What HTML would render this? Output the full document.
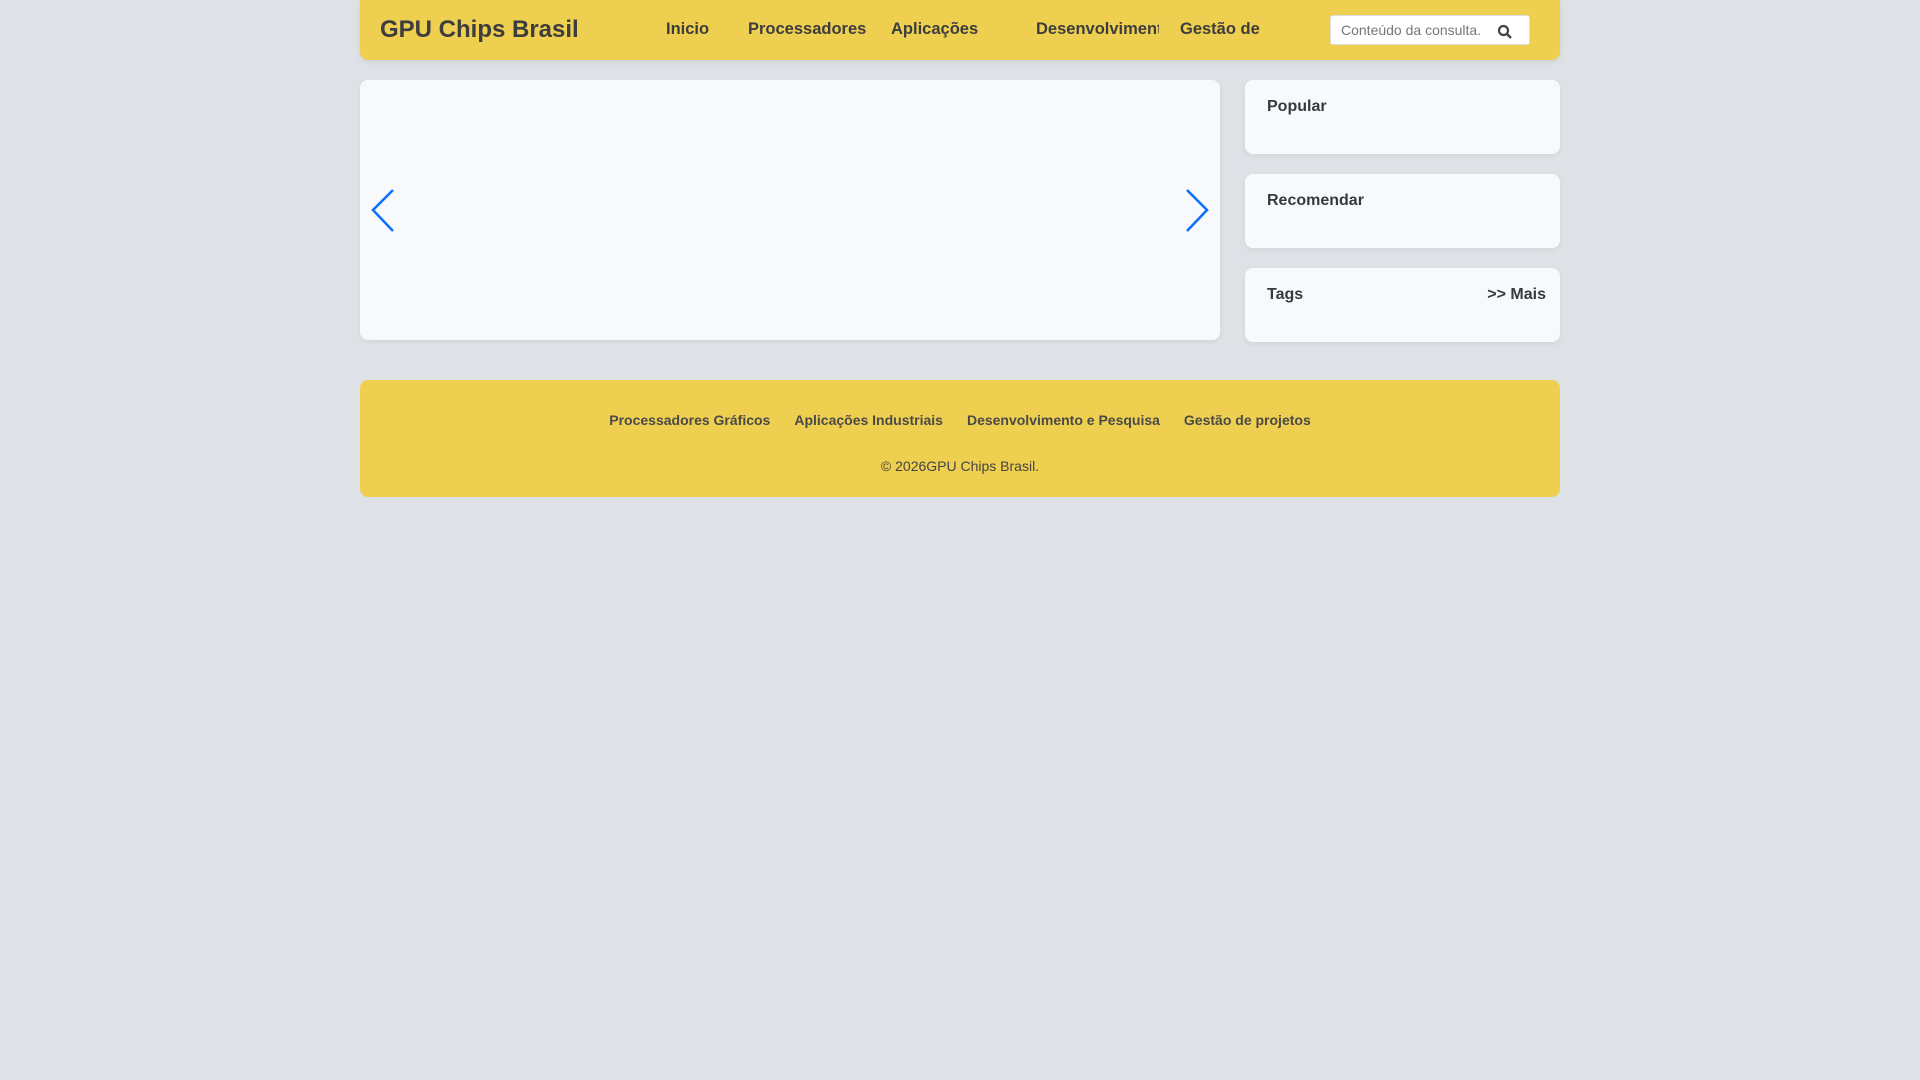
<!DOCTYPE html>
<html><head><meta charset="utf-8"><style>
*{margin:0;padding:0;box-sizing:border-box}
body{width:1920px;height:1080px;background:#dee2e6;font-family:"Liberation Sans",sans-serif;position:relative;overflow:hidden;color:#343a40}
.hdr{position:absolute;left:360px;top:0;width:1200px;height:60px;background:#eecf4f;border-radius:0 0 8px 8px;box-shadow:0 2px 6px rgba(0,0,0,.08)}
.t{position:absolute;white-space:nowrap;font-weight:bold;color:#3d3d3d}
.box{position:absolute;background:#f8f9fa;border-radius:8px;box-shadow:0 2px 6px rgba(0,0,0,.06)}
.foot{position:absolute;left:360px;top:380px;width:1200px;height:117px;background:#eecf4f;border-radius:8px}
</style></head><body>
<div class="hdr">
<div class="t" style="left:20px;top:16px;font-size:24px">GPU Chips Brasil</div>
<div class="t" style="left:306px;top:20px;font-size:16.5px">Inicio</div>
<div class="t" style="left:388px;top:20px;font-size:16.5px">Processadores</div>
<div class="t" style="left:531px;top:20px;font-size:16.5px">Aplicações</div>
<div class="t" style="left:676px;top:20px;font-size:16.5px;width:123px;overflow:hidden">Desenvolvimento</div>
<div class="t" style="left:820px;top:20px;font-size:16.5px">Gestão de</div>
<div style="position:absolute;left:970px;top:15px;width:200px;height:30px;background:#fff;border:1px solid #ddd;border-radius:3px">
<span style="position:absolute;left:10px;top:6px;font-size:14px;color:#777">Conteúdo da consulta.</span>
<svg style="position:absolute;left:166px;top:8px" width="16" height="16" viewBox="0 0 16 16"><circle cx="6.5" cy="6.5" r="4.5" fill="none" stroke="#444" stroke-width="2.2"/><path d="M10 10l4 4" stroke="#444" stroke-width="2.5"/></svg>
</div>
</div>
<div class="box" style="left:360px;top:80px;width:860px;height:260px">
<svg style="position:absolute;left:10px;top:108px" width="26" height="46" viewBox="0 0 26 46"><path d="M23 2L3 22L23 43" fill="none" stroke="#0d6efd" stroke-width="2.5"/></svg>
<svg style="position:absolute;left:824px;top:108px" width="26" height="46" viewBox="0 0 26 46"><path d="M3 2L23 22L3 43" fill="none" stroke="#0d6efd" stroke-width="2.5"/></svg>
</div>
<div class="box" style="left:1245px;top:80px;width:315px;height:74px"><div class="t" style="left:22px;top:18px;font-size:16px;color:#343a40">Popular</div></div>
<div class="box" style="left:1245px;top:174px;width:315px;height:74px"><div class="t" style="left:22px;top:18px;font-size:16px;color:#343a40">Recomendar</div></div>
<div class="box" style="left:1245px;top:268px;width:315px;height:74px"><div class="t" style="left:22px;top:18px;font-size:16px;color:#343a40">Tags</div><div class="t" style="right:14px;top:18px;font-size:16px;color:#343a40">&gt;&gt; Mais</div></div>
<div class="foot">
<div style="position:absolute;left:0;right:0;top:32px;text-align:center;font-size:14px;font-weight:bold;color:#4a4a4a">
<span style="margin:0 12px">Processadores Gráficos</span><span style="margin:0 12px">Aplicações Industriais</span><span style="margin:0 12px">Desenvolvimento e Pesquisa</span><span style="margin:0 12px">Gestão de projetos</span></div>
<div style="position:absolute;left:0;right:0;top:78px;text-align:center;font-size:14px;color:#444">© 2026GPU Chips Brasil.</div>
</div>
</body></html>
